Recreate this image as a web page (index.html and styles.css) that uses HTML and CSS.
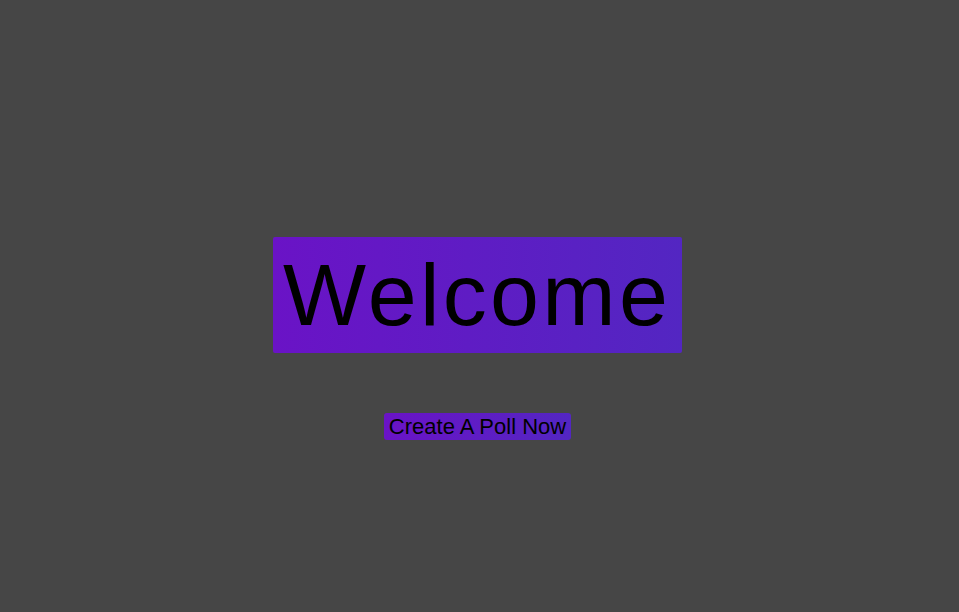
FILE: index.html
```html
<!DOCTYPE html>
<html>
<head>
<meta charset="utf-8">
<link rel="stylesheet" href="styles.css">
</head>
<body>
<main class="page">
  <h1 class="title">Welcome</h1>
  <button class="cta">Create A Poll Now</button>
</main>
</body>
</html>
```
FILE: styles.css
```css
html, body {
  margin: 0;
  padding: 0;
  background: #464646;
  height: 100%;
}
.page {
  display: flex;
  flex-direction: column;
  align-items: center;
  padding-top: 237px;
  padding-right: 4px;
  box-sizing: border-box;
  font-family: "Liberation Sans", Arial, sans-serif;
}
.title {
  margin: 0;
  font-size: 88px;
  font-weight: 400;
  letter-spacing: 3.3px;
  line-height: 100px;
  padding: 8px 11px 8px 10px;
  color: #000;
  background: linear-gradient(to right, #6a13c6, #5326c2);
  border-radius: 2px;
}
.cta {
  margin-top: 60px;
  font-family: "Liberation Sans", Arial, sans-serif;
  font-size: 22px;
  line-height: 25px;
  padding: 1px 5px;
  border: none;
  border-radius: 3px;
  color: #000;
  background: linear-gradient(to right, #6a13c6, #5326c2);
  cursor: pointer;
}
```
